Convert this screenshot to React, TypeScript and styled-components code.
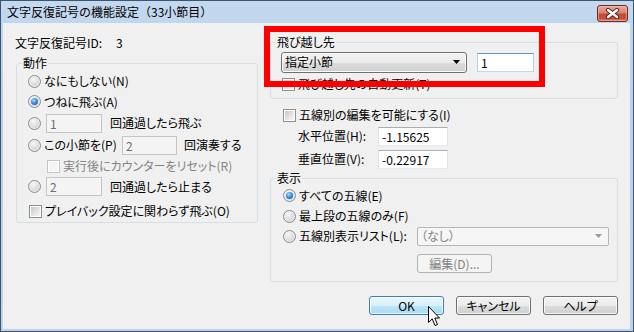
import React from "react";
import styled, { createGlobalStyle } from "styled-components";

const GlobalStyle = createGlobalStyle`
  html, body {
    margin: 0;
    padding: 0;
    background: #ffffff;
  }
  body {
    font-family: "Noto Sans CJK JP", "Noto Sans", sans-serif;
    font-size: 12px;
    color: #000;
    font-feature-settings: "palt";
  }
  * {
    box-sizing: border-box;
  }
`;

const Screen = styled.div`
  position: relative;
  width: 634px;
  height: 332px;
`;

const Window = styled.div`
  width: 634px;
  height: 332px;
  border: 1px solid #3b5573;
  background: linear-gradient(#c4d8ee, #b9d1ea 30%, #bcd3eb);
  padding: 0 3px 2px 2px;
  display: flex;
  flex-direction: column;
  overflow: hidden;
`;

const TitleBar = styled.div`
  height: 22px;
  flex: none;
  display: flex;
  align-items: center;
  justify-content: space-between;
  padding: 0 2px 0 4px;
`;

const TitleText = styled.div`
  font-size: 12px;
  line-height: 16px;
  font-feature-settings: normal;
  white-space: nowrap;
`;

const CloseButton = styled.div`
  width: 31px;
  height: 17px;
  margin-top: 2px;
  border: 1px solid #6e2a22;
  border-radius: 3px;
  background: linear-gradient(#e9a99b 0%, #d98272 45%, #c44b37 55%, #c8503a 85%, #dc8a68 100%);
  box-shadow: inset 0 0 0 1px rgba(255, 210, 200, 0.45);
  display: flex;
  align-items: center;
  justify-content: center;
`;

const Client = styled.div`
  flex: 1;
  background: #f0f0f0;
  padding: 12px 12px 0 12px;
  display: flex;
  flex-direction: column;
`;

const Columns = styled.div`
  display: flex;
  gap: 12px;
`;

const Column = styled.div<{ $w: number }>`
  width: ${(p) => p.$w}px;
  flex: none;
  display: flex;
  flex-direction: column;
`;

const IdRow = styled.div`
  height: 16px;
  line-height: 16px;
  display: flex;
`;

const IdLabel = styled.span`
  width: 101px;
`;

const Group = styled.fieldset<{ $ml?: number; $mt?: number }>`
  margin: ${(p) => p.$mt ?? 0}px 0 0 ${(p) => p.$ml ?? 0}px;
  padding: 0;
  min-width: 0;
  border: 1px solid #d5dfe5;
  border-radius: 3px;
`;

const Legend = styled.legend`
  padding: 0 1px;
  margin-left: 5px;
  font-size: 12px;
  line-height: 14px;
`;

const GroupBody = styled.div<{ $pl: number; $pt?: number; $pb?: number }>`
  padding: ${(p) => p.$pt ?? 0}px 0 ${(p) => p.$pb ?? 0}px ${(p) => p.$pl}px;
  display: flex;
  flex-direction: column;
`;

const Row = styled.div<{ $h: number; $pl?: number; $mt?: number }>`
  height: ${(p) => p.$h}px;
  margin-top: ${(p) => p.$mt ?? 0}px;
  padding-left: ${(p) => p.$pl ?? 0}px;
  display: flex;
  align-items: center;
  white-space: nowrap;
`;

const Text = styled.span<{ $ml?: number; $w?: number; $dim?: boolean }>`
  margin-left: ${(p) => p.$ml ?? 3}px;
  width: ${(p) => (p.$w ? `${p.$w}px` : "auto")};
  flex: none;
  line-height: 16px;
  color: ${(p) => (p.$dim ? "#838383" : "#000")};
`;

const Radio = styled.span<{ $on?: boolean }>`
  position: relative;
  flex: none;
  width: 13px;
  height: 13px;
  border-radius: 50%;
  border: 1px solid #8a8c8e;
  background: radial-gradient(circle at 38% 32%, #f6f6f6 0%, #dedede 50%, #c3c3c3 100%);
  box-shadow: inset 0 0 0 1px rgba(255, 255, 255, 0.55);

  &::after {
    content: "";
    display: ${(p) => (p.$on ? "block" : "none")};
    position: absolute;
    left: 2px;
    top: 2px;
    width: 7px;
    height: 7px;
    border-radius: 50%;
    background: radial-gradient(circle at 40% 35%, #a8e0ff 0%, #3c8ee0 45%, #174b98 100%);
  }
`;

const Check = styled.span<{ $disabled?: boolean; $ml?: number }>`
  flex: none;
  width: 13px;
  height: 13px;
  margin-left: ${(p) => p.$ml ?? 0}px;
  border: 1px solid ${(p) => (p.$disabled ? "#c4c4c4" : "#8e8f8f")};
  background: #fff;
  padding: 1px;

  &::after {
    content: "";
    display: block;
    width: 100%;
    height: 100%;
    background: ${(p) =>
      p.$disabled
        ? "#f4f4f4"
        : "linear-gradient(135deg, #c6c6c6 0%, #e4e4e4 55%, #f6f6f6 100%)"};
  }
`;

const Edit = styled.div<{ $w: number; $ml?: number; $state?: "normal" | "focus" | "disabled" }>`
  flex: none;
  width: ${(p) => p.$w}px;
  height: 19px;
  margin-left: ${(p) => p.$ml ?? 0}px;
  padding-left: 3px;
  line-height: 17px;
  background: ${(p) => (p.$state === "disabled" ? "#f4f4f4" : "#ffffff")};
  color: ${(p) => (p.$state === "disabled" ? "#6d6d6d" : "#000")};
  border: 1px solid;
  border-color: ${(p) =>
    p.$state === "focus"
      ? "#5d97c9 #b5d0e8 #bcd9ee #b5d0e8"
      : p.$state === "disabled"
      ? "#c2c4c6"
      : "#abadb3 #e2e3ea #e3e9ef #dbdfe6"};
`;

const Combo = styled.div<{ $w: number; $ml?: number; $disabled?: boolean }>`
  flex: none;
  width: ${(p) => p.$w}px;
  height: ${(p) => (p.$disabled ? 19 : 21)}px;
  margin-left: ${(p) => p.$ml ?? 0}px;
  border: 1px solid ${(p) => (p.$disabled ? "#b4b7ba" : "#707070")};
  border-radius: ${(p) => (p.$disabled ? 2 : 3)}px;
  background: ${(p) =>
    p.$disabled
      ? "#f6f6f6"
      : "linear-gradient(#f3f3f3 0%, #ebebeb 50%, #dddddd 50%, #cfcfcf 100%)"};
  box-shadow: ${(p) => (p.$disabled ? "none" : "inset 0 0 0 1px #fbfbfb")};
  color: ${(p) => (p.$disabled ? "#838383" : "#000")};
  display: flex;
  align-items: center;
  justify-content: space-between;
  padding: 0 6px 0 3px;
  line-height: 16px;
`;

const ButtonRow = styled.div`
  margin-top: 14px;
  display: flex;
  justify-content: flex-end;
  gap: 12px;
`;

const Button = styled.div<{ $variant?: "hover" | "disabled" }>`
  flex: none;
  width: 75px;
  height: 19px;
  border-radius: 3px;
  border: 1px solid
    ${(p) => (p.$variant === "hover" ? "#3c7fb1" : p.$variant === "disabled" ? "#adb2b5" : "#707070")};
  background: ${(p) =>
    p.$variant === "hover"
      ? "linear-gradient(#eaf6fd 0%, #d9f0fc 50%, #bee6fd 50%, #a7d9f5 100%)"
      : p.$variant === "disabled"
      ? "#f4f4f4"
      : "linear-gradient(#f2f2f2 0%, #ebebeb 50%, #dddddd 50%, #cfcfcf 100%)"};
  box-shadow: ${(p) => (p.$variant === "disabled" ? "none" : "inset 0 0 0 1px rgba(255,255,255,0.8)")};
  color: ${(p) => (p.$variant === "disabled" ? "#838383" : "#000")};
  display: flex;
  align-items: center;
  justify-content: center;
  line-height: 16px;
`;

const Highlight = styled.div`
  position: absolute;
  left: 264px;
  top: 26px;
  width: 281px;
  height: 61px;
  border: 6px solid #ff0000;
  pointer-events: none;
`;

const Cursor = styled.svg`
  position: absolute;
  left: 428px;
  top: 306px;
`;

function Arrow({ color }: { color: string }) {
  return (
    <svg width="7" height="4" viewBox="0 0 7 4">
      <polygon points="0,0 7,0 3.5,4" fill={color} />
    </svg>
  );
}

export default function App() {
  return (
    <Screen>
      <GlobalStyle />
      <Window>
        <TitleBar>
          <TitleText>文字反復記号の機能設定（33小節目）</TitleText>
          <CloseButton>
            <svg width="15" height="11" viewBox="0 0 15 11">
              <path d="M3 2 L12 9 M12 2 L3 9" stroke="#5a1f18" strokeWidth="4.2" strokeLinecap="round" />
              <path d="M3 2 L12 9 M12 2 L3 9" stroke="#ffffff" strokeWidth="2.4" strokeLinecap="round" />
            </svg>
          </CloseButton>
        </TitleBar>
        <Client>
          <Columns>
            <Column $w={243}>
              <IdRow>
                <IdLabel>文字反復記号ID:</IdLabel>
                <span>3</span>
              </IdRow>
              <Group $ml={1} $mt={5}>
                <Legend>動作</Legend>
                <GroupBody $pl={11} $pt={1}>
                  <Row $h={20}>
                    <Radio />
                    <Text>なにもしない(N)</Text>
                  </Row>
                  <Row $h={21}>
                    <Radio $on />
                    <Text>つねに飛ぶ(A)</Text>
                  </Row>
                  <Row $h={22}>
                    <Radio />
                    <Edit $w={56} $ml={5} $state="disabled">1</Edit>
                    <Text $ml={8}>回通過したら飛ぶ</Text>
                  </Row>
                  <Row $h={22}>
                    <Radio />
                    <Text $w={78}>この小節を(P)</Text>
                    <Edit $w={55} $state="disabled">2</Edit>
                    <Text $ml={7}>回演奏する</Text>
                  </Row>
                  <Row $h={20} $pl={19}>
                    <Check $disabled />
                    <Text $dim>実行後にカウンターをリセット(R)</Text>
                  </Row>
                  <Row $h={21}>
                    <Radio />
                    <Edit $w={56} $ml={5} $state="disabled">2</Edit>
                    <Text $ml={8}>回通過したら止まる</Text>
                  </Row>
                  <Row $h={22} $mt={3}>
                    <Check $ml={1} />
                    <Text>プレイバック設定に関わらず飛ぶ(O)</Text>
                  </Row>
                </GroupBody>
              </Group>
            </Column>

            <Column $w={348}>
              <Group>
                <Legend>飛び越し先</Legend>
                <GroupBody $pl={10} $pb={5}>
                  <Row $h={26}>
                    <Combo $w={186}>
                      <span>指定小節</span>
                      <Arrow color="#000" />
                    </Combo>
                    <Edit $w={57} $ml={10} $state="focus">1</Edit>
                  </Row>
                  <Row $h={18}>
                    <Check $ml={1} />
                    <Text>飛び越し先の自動更新(T)</Text>
                  </Row>
                </GroupBody>
              </Group>
              <Row $h={20} $mt={6} $pl={13}>
                <Check />
                <Text>五線別の編集を可能にする(I)</Text>
              </Row>
              <Row $h={22} $pl={28}>
                <Text $ml={0} $w={80}>水平位置(H):</Text>
                <Edit $w={70}>-1.15625</Edit>
              </Row>
              <Row $h={24} $pl={28}>
                <Text $ml={0} $w={80}>垂直位置(V):</Text>
                <Edit $w={70}>-0.22917</Edit>
              </Row>
              <Group>
                <Legend>表示</Legend>
                <GroupBody $pl={12} $pb={8}>
                  <Row $h={21}>
                    <Radio $on />
                    <Text>すべての五線(E)</Text>
                  </Row>
                  <Row $h={20}>
                    <Radio />
                    <Text>最上段の五線のみ(F)</Text>
                  </Row>
                  <Row $h={20}>
                    <Radio />
                    <Text $w={118}>五線別表示リスト(L):</Text>
                    <Combo $w={192} $disabled>
                      <span>（なし）</span>
                      <Arrow color="#9a9a9a" />
                    </Combo>
                  </Row>
                  <Row $h={19} $mt={8} $pl={134}>
                    <Button $variant="disabled">編集(D)...</Button>
                  </Row>
                </GroupBody>
              </Group>
            </Column>
          </Columns>
          <ButtonRow>
            <Button $variant="hover">OK</Button>
            <Button>キャンセル</Button>
            <Button>ヘルプ</Button>
          </ButtonRow>
        </Client>
      </Window>
      <Highlight />
      <Cursor width="13" height="21" viewBox="0 0 13 21">
        <path
          d="M0.5 0.5 L0.5 16.5 L4.2 12.8 L7 19.5 L9.5 18.5 L6.8 12 L11.5 12 Z"
          fill="#ffffff"
          stroke="#000000"
          strokeWidth="1"
          strokeLinejoin="miter"
        />
      </Cursor>
    </Screen>
  );
}
